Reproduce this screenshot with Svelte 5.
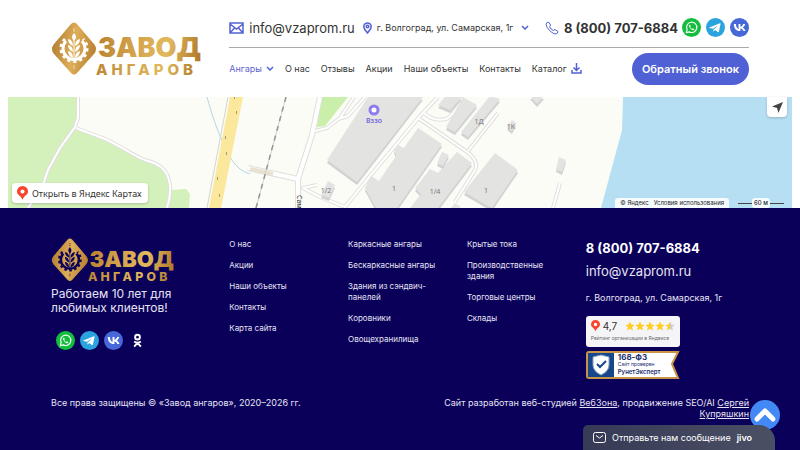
<script>
	let phone = '8 (800) 707-6884'
	let email = 'info@vzaprom.ru'
	let address = 'г. Волгоград, ул. Самарская, 1г'

	let menu = ['О нас', 'Отзывы', 'Акции', 'Наши объекты', 'Контакты']

	let footerMenu = [
		['О нас', 'Акции', 'Наши объекты', 'Контакты', 'Карта сайта'],
		['Каркасные ангары', 'Бескаркасные ангары', 'Здания из сэндвич-панелей', 'Коровники', 'Овощехранилища'],
		['Крытые тока', 'Производственные здания', 'Торговые центры', 'Склады']
	]

	let buildings = [
		'368,97 423,97 357,182 327,160',
		'418,128 442,144 397,208 376,208 365,188 371,176 379,181 396,156 394,150 398,145 404,148',
		'457,152 472,163 438,208 410,208 421,194 415,188 430,169 438,173',
		'495,153 518,170 492,208 488,206 464,192',
		'442,152 449,155 443,166 437,163',
		'445,97 462,97 450,110 438,105',
		'463,97 477,105 455,132 446,127',
		'490,96 500,99 468,137 461,132',
		'512,120 516,123 512,131 507,127',
		'328,181 335,185 329,198 321,195',
		'530,96 544,96 537,104',
		'559,157 566,160 562,172 556,169',
		'455,203 461,207 448,212'
	]

	let roads = [
		'M78 97 V118 L75 127 L60 148 L48 170 L42 188 L28 208',
		'M76 128 L105 139 C125 148 135 157 145 160 C160 164 168 170 170 185 C171 195 169 202 167 208',
		'M438 97 L420 116 L366 181 L345 207 L320 197 L303 188 L317 185',
		'M418 118 L463 149 Q480 160 475 170 L455 202',
		'M468 151 L498 113',
		'M423 112 Q433 122 446 119 Q452 117 463 98',
		'M315 131 L327 128 L340 118 L354 97',
		'M338 119 L348 116 L365 97',
		'M560 183 L553 208'
	]
</script>

{#snippet logo(id)}
	<svg class="logo" viewBox="0 0 150 54" role="img" aria-label="Завод ангаров">
		<defs>
			<linearGradient id="gold-{id}" x1="0" y1="0" x2="150" y2="30" gradientUnits="userSpaceOnUse">
				<stop offset="0" stop-color="#a8742b" />
				<stop offset=".18" stop-color="#dfae59" />
				<stop offset=".32" stop-color="#b98332" />
				<stop offset=".55" stop-color="#d2a149" />
				<stop offset=".78" stop-color="#e2b95e" />
				<stop offset="1" stop-color="#b17a29" />
			</linearGradient>
			<mask id="mark-{id}">
				<path d="M20 2 Q23-1 26 2 L43 22 Q47 27 43 32 L26 51 Q23 54 20 51 L3 32 Q-1 27 3 22Z" fill="#fff" />
				<path d="M15 19 A11 11 0 1 0 31 19" fill="none" stroke="#000" stroke-width="3" />
				<path d="M14 17 A13 13 0 1 0 32 17" fill="none" stroke="#000" stroke-width="3" stroke-dasharray="3 3" />
				<path d="M23 17 V37" stroke="#000" stroke-width="1" />
				<path d="M23 11 Q27 15 23 19 Q19 15 23 11 M22 24 Q17 22 17 17 Q22 18 22 24 M24 24 Q29 22 29 17 Q24 18 24 24 M22 30 Q17 28 17 23 Q22 24 22 30 M24 30 Q29 28 29 23 Q24 24 24 30 M22 36 Q17 34 17 29 Q22 30 22 36 M24 36 Q29 34 29 29 Q24 30 24 36" fill="#000" />
				<path d="M22 7h2M22 9h2M22 44h2M22 46h2" stroke="#000" opacity=".6" />
			</mask>
		</defs>
		<rect width="48" height="54" fill="url(#gold-{id})" mask="url(#mark-{id})" />
		<text class="word" x="47" y="35" fill="url(#gold-{id})">ЗАВОД</text>
		<text class="sub" x="45" y="53" fill="url(#gold-{id})">АНГАРОВ</text>
	</svg>
{/snippet}

{#snippet whatsapp()}
	<a class="social" href="#whatsapp" aria-label="WhatsApp">
		<svg viewBox="0 0 20 20">
			<circle cx="10" cy="10" r="10" fill="#14bd3d" />
			<path d="M4.500 15.500 L5.400 12.300 A5.400 5.400 0 1 1 7.700 14.600Z" fill="none" stroke="#fff" stroke-width="1.200" stroke-linejoin="round" />
			<path d="M8 7 Q7 7.500 7.300 8.800 Q8.500 12 11.300 12.800 Q12.700 12.900 13 11.800 L11.500 10.900 L10.700 11.600 Q9.200 11 8.600 9.500 L9.200 8.700 L8.600 7.200Z" fill="#fff" />
		</svg>
	</a>
{/snippet}

{#snippet telegram()}
	<a class="social" href="#telegram" aria-label="Telegram">
		<svg viewBox="0 0 20 20">
			<circle cx="10" cy="10" r="10" fill="#2ba3de" />
			<path d="M3.500 10 L14.600 5.500 Q15.500 5.300 15.300 6.300 L13.600 14.300 Q13.300 15.200 12.400 14.700 L9.700 12.700 L8.300 14 Q7.800 14.400 7.700 13.700 L7.200 11.400 L3.700 10.500 Q3 10.300 3.500 10Z" fill="#fff" />
			<path d="M7.400 11.200 L12.800 7.700 L8.500 11.900 L8 13.500Z" fill="#2ba3de" />
		</svg>
	</a>
{/snippet}

{#snippet vk()}
	<a class="social" href="#vk" aria-label="ВКонтакте">
		<svg viewBox="0 0 20 20">
			<circle cx="10" cy="10" r="10" fill="#4668d8" />
			<path d="M10.600 13.800 C6.500 13.800 4.100 11 4 6.400 h2.200 C6.300 9.800 7.800 11.200 9 11.500 V6.400 h2 v2.900 C12.200 9.200 13.400 7.900 13.900 6.400 h2 C15.600 8.100 14.300 9.500 13.400 10 C14.300 10.400 15.700 11.500 16.300 13.800 h-2.200 C13.600 12.400 12.500 11.300 11 11.100 v2.700Z" fill="#fff" />
		</svg>
	</a>
{/snippet}

{#snippet pin()}
	<svg class="pin" viewBox="0 0 12 15">
		<path d="M6 0 A6 6 0 0 1 12 6 C12 10 8 10 6 15 C4 10 0 10 0 6 A6 6 0 0 1 6 0Z" fill="#f8452f" />
		<circle cx="6" cy="6" r="2.200" fill="#fff" />
	</svg>
{/snippet}

{#snippet chevron()}
	<svg class="chevron" viewBox="0 0 8 5"><path d="M1 1 L4 4 L7 1" /></svg>
{/snippet}

<header class="grid">
	<a class="brand" href="#home">{@render logo('top')}</a>
	<div class="head">
		<div class="contacts">
			<a class="contact email" href="mailto:{email}">
				<svg class="mail line" viewBox="0 0 15 12"><path d="M1 1h13v10H1zM1 2l6.500 5L14 2M1 11l4.500-5M14 11L9.500 6" /></svg>
				{email}
			</a>
			<button class="contact address">
				<svg class="marker line" viewBox="0 0 9 12"><path d="M4.500 11 L1.500 7 Q0 3.500 2 1.800 Q4.500 0 7 1.800 Q9 3.500 7.500 7Z" /><circle cx="4.500" cy="4.500" r="1.300" /></svg>
				<span>{address}</span>
				{@render chevron()}
			</button>
			<a class="contact phone" href="tel:88007076884">
				<svg class="handset line" viewBox="0 0 14 14"><path d="M3.500 1 L1.500 2 Q.5 3.500 2.200 6.500 Q5 11 9 12.700 Q11.500 13.500 12.500 12 L13 10.500 L10 8.500 L8.300 9.500 Q5.700 8.500 4.600 5.700 L5.600 4Z" /></svg>
				{phone}
			</a>
			<div class="socials">
				{@render whatsapp()}
				{@render telegram()}
				{@render vk()}
			</div>
		</div>
		<div class="bottom">
			<nav>
				<a class="active" href="#hangars">Ангары {@render chevron()}</a>
				{#each menu as item}
					<a href="#menu">{item}</a>
				{/each}
				<a href="#catalog">Каталог
					<svg class="download line" viewBox="0 0 11 11"><path d="M5.500 0v7M2.500 4.500l3 3 3-3M1 7v3h9V7" /></svg>
				</a>
			</nav>
			<button class="call">Обратный звонок</button>
		</div>
	</div>
</header>

<section class="map">
	<svg class="ground" viewBox="8 97 784 111" preserveAspectRatio="xMidYMid slice">
		<rect x="8" y="97" width="784" height="111" fill="#fbfcf6" />
		<path d="M8 97H77V120L75 128L100 137L115 146L140 159L160 165L170 178L172 190L186 189L190 194L189 208H8Z" fill="#d4f1bb" />
		<path d="M321 97H348L325 126L317 127Z" fill="#c9efaa" />
		<path d="M623 97H792V208H601L622 130Z" fill="#b7dff3" />
		<path d="M207 97C212 115 217 130 222 140C228 155 235 170 250 174" fill="none" stroke="#b5d6e6" />
		<path d="M228 97L207 208" stroke="#d4d4d0" />
		<path d="M230 97H243L221 208H209Z" fill="#fbe89d" />
		<g fill="#a39a74"><path d="M234 97h1v2h-1zM236 111h1v3h-1zM225 136h1v3h-1zM226 152h1v3h-1zM217 177h1v3h-1zM219 194h1v3h-1z" /></g>
		<path class="casing wide" d="M320 97L312 135L298 179V208M248 168L298 179" />
		<path class="road wide" d="M320 97L312 135L298 179V208M248 168L298 179" />
		<path d="M250 169L273 174" stroke="#e7e2cf" stroke-width="4" />
		<path class="casing" d={roads.join(' ')} />
		<path class="road" d={roads.join(' ')} />
		<path d="M286 97L256 208" stroke="#cfcfcf" stroke-width="1" />
		<path d="M286 97L256 208" stroke="#949494" stroke-width="1.500" stroke-dasharray="5 5" />
		{#each buildings as points}
			<polygon {points} transform="translate(0 3)" fill="#d2d2d2" />
			<polygon {points} fill="#e3e3e2" />
		{/each}
		<circle cx="374" cy="110" r="4" fill="#fff" stroke="#8e7df0" stroke-width="3" />
		<g class="labels">
			<text class="poi" x="374" y="123">Вззо</text>
			<text x="394" y="191">1</text>
			<text x="486" y="193">1</text>
			<text x="435" y="194">1/4</text>
			<text x="326" y="193">1/2</text>
			<text x="479" y="124">1Д</text>
			<text x="511" y="129">1К</text>
			<text class="street" transform="translate(297 195) rotate(90)">Сам</text>
		</g>
	</svg>
	<a class="open" href="#map">{@render pin()}Открыть в Яндекс Картах</a>
	<button class="locate" aria-label="Моё местоположение">
		<svg viewBox="0 0 12 12"><path d="M12 0 L7 12 L5.500 6.500 L0 5Z" fill="#444" /></svg>
	</button>
	<div class="copyright">
		<span class="terms"><a href="#yandex">© Яндекс</a><a href="#terms">Условия использования</a></span>
		<span class="scale"><i></i><b>60 м</b><i></i></span>
	</div>
</section>

<footer>
	<div class="grid">
		<div class="about">
			<a href="#home">{@render logo('foot')}</a>
			<p>Работаем 10 лет для любимых клиентов!</p>
			<div class="socials">
				{@render whatsapp()}
				{@render telegram()}
				{@render vk()}
				<a class="social" href="#ok" aria-label="Одноклассники">
					<svg viewBox="0 0 20 20"><g fill="none" stroke="#fff" stroke-width="2"><circle cx="10" cy="6.500" r="2.500" /><path d="M6.500 11 Q10 13.500 13.500 11M10 12.500L6.500 16.500M10 12.500L13.500 16.500" /></g></svg>
				</a>
			</div>
		</div>
		{#each footerMenu as column}
			<ul>
				{#each column as item}
					<li><a href="#page">{item}</a></li>
				{/each}
			</ul>
		{/each}
		<div class="reach">
			<a class="phone" href="tel:88007076884">{phone}</a>
			<a class="email" href="mailto:{email}">{email}</a>
			<span class="address">{address}</span>
			<a class="rating" href="#rating">
				<span class="score">
					{@render pin()}
					<b>4,7</b>
					<svg class="stars" viewBox="0 0 50 10">
						<defs>
							<linearGradient id="half"><stop offset=".5" stop-color="#ffcc1f" /><stop offset=".5" stop-color="#ccc" /></linearGradient>
						</defs>
						{#each [0, 1, 2, 3, 4] as n}
							<path transform="translate({n * 10} 0)" d="M5 .5L6.300 3.600L9.700 3.900L7.100 6.100L7.900 9.500L5 7.700L2.100 9.500L2.900 6.100L.3 3.900L3.700 3.600Z" fill={n < 4 ? '#ffcc1f' : 'url(#half)'} />
						{/each}
					</svg>
				</span>
				<small>Рейтинг организации в Яндексе</small>
			</a>
			<a class="expert" href="#expert">
				<svg viewBox="0 0 94 28" preserveAspectRatio="none">
					<path d="M3 1H92L86 13L92 27H3Q1 27 1 25V3Q1 1 3 1Z" fill="#fff" stroke="#c79545" stroke-width="2" />
					<path d="M2 2H28V26H2Z" fill="#17478a" />
					<path d="M15 4L23 6V14Q23 20 15 24Q7 20 7 14V6Z" fill="#fff" stroke="#8ba3c8" stroke-width="1" />
					<path d="M11 13L14 16L20 10" fill="none" stroke="#17478a" stroke-width="2" />
				</svg>
				<span class="seal"><b>168-ФЗ</b><small>Сайт проверен</small><strong>РунетЭксперт</strong></span>
			</a>
		</div>
	</div>
	<div class="legal">
		<span>Все права защищены © «Завод ангаров», 2020–2026 гг.</span>
		<span class="credits">Сайт разработан веб-студией <a href="#webzona">ВебЗона</a>, продвижение SEO/AI <a href="#seo">Сергей Купряшкин</a></span>
	</div>
</footer>

<button class="up" aria-label="Наверх">
	<svg viewBox="0 0 30 30"><path d="M7 19L15 11L23 19" fill="none" stroke="#fff" stroke-width="5" stroke-linecap="round" stroke-linejoin="round" /></svg>
</button>
<button class="chat">
	<svg viewBox="0 0 13 11"><rect x=".5" y=".5" width="12" height="10" rx="2" /><path d="M3 3.500L6.500 6L10 3.500" /></svg>
	Отправьте нам сообщение
	<b>jivo</b>
</button>

<style>
	:global(body) {
		background: #0a005a;
		font-family: Inter, "Liberation Sans", sans-serif;
		font-size: 9px;
		line-height: 11px;
		color: #333;
	}

	a {
		color: inherit;
		text-decoration: none;
	}

	button {
		border: 0;
		padding: 0;
		background: none;
		font: inherit;
		color: inherit;
		cursor: pointer;
	}

	svg {
		display: block;
		flex: none;
	}

	.grid {
		display: grid;
		grid-template-columns: repeat(12, 1fr);
		column-gap: 15px;
	}

	header {
		background: #fff;
		padding: 8px 51px 12px;
	}

	.brand {
		grid-column: span 3;
		padding-top: 14px;
	}

	.logo {
		overflow: visible;
	}

	.brand .logo {
		width: 150px;
	}

	.word {
		font-size: 27px;
		font-weight: 900;
	}

	.sub {
		font-size: 15px;
		font-weight: 800;
		letter-spacing: 4px;
	}

	.head {
		grid-column: span 9;
	}

	.contacts {
		display: flex;
		align-items: center;
		height: 39px;
		gap: 8px;
		border-bottom: 1px solid #aaa;
	}

	.contact {
		display: flex;
		align-items: center;
		gap: 5px;
		white-space: nowrap;
	}

	.contact.phone {
		margin-left: auto;
	}

	.email {
		font-size: 13px;
		line-height: 16px;
	}

	.phone {
		font-size: 13px;
		line-height: 16px;
		font-weight: 700;
	}

	.address .chevron {
		margin-left: 3px;
	}

	.line {
		fill: none;
		stroke: #5361d6;
		stroke-width: 1.5px;
	}

	.mail {
		width: 15px;
	}

	.marker {
		width: 9px;
	}

	.handset {
		width: 14px;
		stroke-width: 1px;
	}

	.download {
		width: 11px;
	}

	.chevron {
		width: 8px;
		fill: none;
		stroke: #5361d6;
		stroke-width: 1.5px;
	}

	.socials {
		display: flex;
		gap: 5px;
	}

	.contacts .socials {
		margin-left: -4px;
	}

	.social svg {
		width: 19px;
	}

	.bottom {
		display: flex;
		align-items: center;
		justify-content: space-between;
		margin-top: 5px;
	}

	nav {
		display: flex;
		gap: 11px;
		padding-bottom: 2px;
	}

	nav a {
		display: flex;
		align-items: center;
		gap: 4px;
		white-space: nowrap;
	}

	.active {
		color: #5f5fd3;
	}

	.call {
		height: 32px;
		padding: 0 10px;
		border-radius: 16px;
		background: #5061d5;
		color: #fff;
		font-size: 11px;
		font-weight: 600;
		white-space: nowrap;
	}

	.map {
		position: relative;
		border: solid #fff;
		border-width: 0 8px;
		font-family: "Noto Sans", sans-serif;
	}

	.ground {
		width: 100%;
		height: 111px;
	}

	.casing,
	.road {
		fill: none;
		stroke: #dfdfdc;
		stroke-width: 4px;
		stroke-linejoin: round;
	}

	.road {
		stroke: #fff;
		stroke-width: 2px;
	}

	.casing.wide {
		stroke-width: 6px;
	}

	.road.wide {
		stroke-width: 4px;
	}

	.labels {
		font-size: 7px;
		fill: #777;
		text-anchor: middle;
	}

	.labels .poi {
		fill: #7566dc;
		font-weight: 600;
	}

	.labels .street {
		fill: #333;
		font-size: 7px;
		text-anchor: start;
	}

	.open {
		position: absolute;
		left: 4px;
		bottom: 5px;
		display: flex;
		align-items: center;
		gap: 4px;
		height: 20px;
		padding: 0 6px 0 5px;
		border-radius: 4px;
		background: #fff;
		box-shadow: 0 1px 3px #0003;
	}

	.pin {
		width: 11px;
	}

	.locate {
		position: absolute;
		right: 5px;
		top: 0;
		display: grid;
		place-items: center;
		width: 20px;
		height: 20px;
		border-radius: 0 0 4px 4px;
		background: #fff;
		box-shadow: 0 1px 3px #0003;
	}

	.locate svg {
		width: 11px;
	}

	.copyright {
		position: absolute;
		right: 8px;
		bottom: 0;
		display: flex;
		gap: 9px;
		font-family: Inter, "Liberation Sans", sans-serif;
		font-size: 6px;
		line-height: 10px;
		color: #222;
	}

	.terms {
		display: flex;
		gap: 5px;
		padding: 0 5px;
		border-radius: 3px 3px 0 0;
		background: #fffd;
	}

	.scale {
		display: flex;
		align-items: center;
	}

	.scale i {
		width: 14px;
		height: 1px;
		background: #444;
	}

	.scale b {
		padding: 0 2px;
		border-radius: 3px;
		background: #fffd;
		font-weight: 500;
	}

	footer {
		padding: 30px 51px;
		color: #e6e4f2;
	}

	.about {
		grid-column: span 3;
	}

	.about .logo {
		width: 123px;
	}

	.about p {
		max-width: 128px;
		margin: 5px 0 16px;
		font-size: 12px;
		line-height: 14px;
	}

	.about .socials {
		margin-left: 5px;
	}

	ul {
		grid-column: span 2;
		display: flex;
		flex-direction: column;
		gap: 10px;
		margin: 0;
		padding: 1px 0 0;
		list-style: none;
		font-size: 8px;
	}

	.reach {
		grid-column: span 3;
		display: flex;
		flex-direction: column;
		align-items: flex-start;
	}

	.reach .phone {
		margin-top: 2px;
		color: #fff;
	}

	.reach .email {
		margin: 7px 0 13px;
	}

	.rating {
		width: 94px;
		margin: 13px 0 4px;
		padding: 3px 5px;
		box-sizing: border-box;
		border-radius: 3px;
		background: #f5f5f8;
		color: #333;
	}

	.score {
		display: flex;
		align-items: center;
		gap: 3px;
		height: 14px;
	}

	.score .pin {
		width: 9px;
	}

	.score b {
		font-weight: 400;
		font-size: 10px;
	}

	.stars {
		width: 50px;
		margin-left: auto;
	}

	small {
		font-size: 5px;
	}

	.rating small {
		display: block;
		white-space: nowrap;
		color: #666;
	}

	.expert {
		display: grid;
		width: 94px;
		height: 28px;
		color: #1c2f6e;
	}

	.expert > * {
		grid-area: 1 / 1;
	}

	.expert svg {
		width: 94px;
	}

	.seal {
		display: flex;
		flex-direction: column;
		padding: 3px 0 0 32px;
		font-size: 6px;
		line-height: 7px;
	}

	.seal b {
		font-size: 8px;
	}

	.seal strong {
		font-weight: 600;
	}

	.legal {
		display: flex;
		justify-content: space-between;
		margin-top: 18px;
	}

	.credits {
		max-width: 320px;
		text-align: right;
	}

	.credits a {
		text-decoration: underline;
	}

	.up {
		position: fixed;
		right: 20px;
		bottom: 20px;
		width: 30px;
		height: 30px;
		border-radius: 50%;
		background: #4389f5;
	}

	.chat {
		position: fixed;
		right: 25px;
		bottom: 0;
		display: flex;
		align-items: center;
		gap: 6px;
		height: 25px;
		padding: 0 23px 0 10px;
		border-radius: 5px 16px 0 0;
		background: linear-gradient(90deg, #363a56, #4a5064);
		color: #fff;
		font-family: Inter, "Liberation Sans", sans-serif;
	}

	.chat svg {
		width: 13px;
		fill: none;
		stroke: #fff;
	}

	.chat b {
		font-weight: 600;
	}
</style>
